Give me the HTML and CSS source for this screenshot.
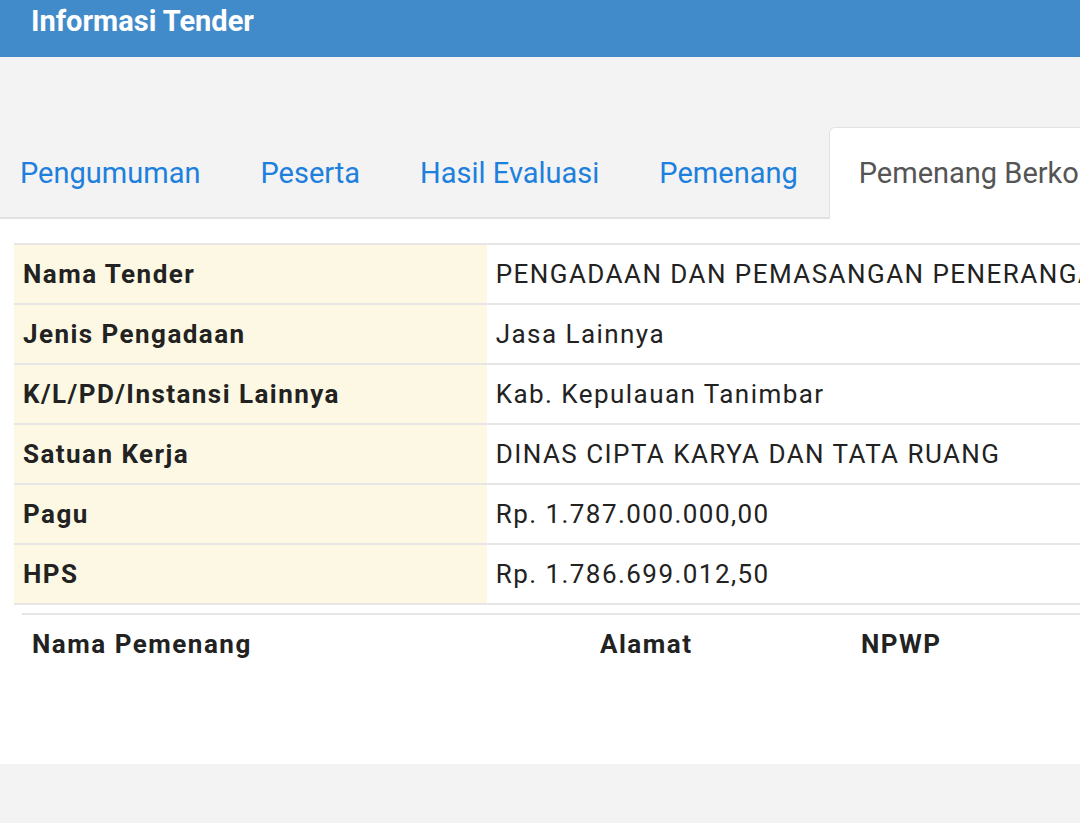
FILE: index.html
```html
<!DOCTYPE html>
<html lang="id">
<head>
<meta charset="utf-8">
<title>Informasi Tender</title>
<link rel="stylesheet" href="styles.css">
</head>
<body>
<div class="page">
  <header class="topbar">
    <h1 class="title">Informasi Tender</h1>
  </header>
  <div class="gap-area"></div>
  <nav class="tabs">
    <a class="tab" href="#">Pengumuman</a>
    <a class="tab" href="#">Peserta</a>
    <a class="tab" href="#">Hasil Evaluasi</a>
    <a class="tab" href="#">Pemenang</a>
    <a class="tab active" href="#">Pemenang Berkontrak</a>
  </nav>
  <main class="panel">
    <table class="info">
      <tr><th>Nama Tender</th><td>PENGADAAN DAN PEMASANGAN PENERANGAN JALAN UMUM</td></tr>
      <tr><th>Jenis Pengadaan</th><td>Jasa Lainnya</td></tr>
      <tr><th>K/L/PD/Instansi Lainnya</th><td>Kab. Kepulauan Tanimbar</td></tr>
      <tr><th>Satuan Kerja</th><td>DINAS CIPTA KARYA DAN TATA RUANG</td></tr>
      <tr><th>Pagu</th><td>Rp. 1.787.000.000,00</td></tr>
      <tr><th>HPS</th><td>Rp. 1.786.699.012,50</td></tr>
    </table>
    <div class="winners">
      <table class="win">
        <tr><th class="c-name">Nama Pemenang</th><th class="c-addr">Alamat</th><th class="c-npwp">NPWP</th></tr>
      </table>
    </div>
  </main>
</div>
</body>
</html>
```
FILE: styles.css
```css
html, body {
  margin: 0;
  padding: 0;
  background: #f3f3f3;
  overflow: hidden;
}
body {
  font-family: Roboto, "Liberation Sans", Arial, sans-serif;
  color: #222;
}
.page {
  width: 1080px;
  overflow: hidden;
}
.topbar {
  background: #428bca;
  height: 57px;
  padding: 0 0 0 31px;
  box-sizing: border-box;
}
.title {
  margin: 0;
  color: #fff;
  font-weight: 700;
  font-size: 29px;
  line-height: 42px;
}
.gap-area {
  height: 70px;
}
.tabs {
  display: flex;
  white-space: nowrap;
  margin-left: -9px;
  border-bottom: 2px solid #e2e2e2;
  height: 90px;
  box-sizing: content-box;
}
.tab {
  display: block;
  padding: 25px 28px;
  margin-right: 2px;
  line-height: 40px;
  font-size: 29px;
  color: #1d80dc;
  text-decoration: none;
  border: 1px solid transparent;
  border-bottom: none;
  border-radius: 6px 6px 0 0;
  height: 90px;
  box-sizing: border-box;
  flex: none;
}
.tab.active {
  background: #fff;
  color: #555;
  border-color: #e2e2e2;
  height: 92px;
  padding-left: 29px;
}
.panel {
  background: #fff;
  height: 545px;
  padding: 24px 0 0 14px;
  box-sizing: border-box;
}
.info {
  border-collapse: collapse;
  width: 1300px;
  font-size: 26px;
  letter-spacing: 1.45px;
}
.info th, .info td {
  border-top: 2px solid #e6e6e6;
  border-bottom: 2px solid #e6e6e6;
  height: 58px;
  padding: 0 9px;
  text-align: left;
  white-space: nowrap;
  vertical-align: middle;
}
.info th {
  background: #fcf8e3;
  font-weight: 700;
  width: 455px;
  color: #222;
}
.info td {
  font-weight: 400;
  color: #222;
}
.winners {
  padding: 8px 0 0 8px;
}
.win {
  border-collapse: collapse;
  width: 1300px;
  font-size: 26px;
  letter-spacing: 1.5px;
}
.win th {
  border-top: 2px solid #e6e6e6;
  text-align: left;
  font-weight: 700;
  height: 58px;
  padding: 0 10px;
  vertical-align: middle;
  color: #222;
}
.c-name { width: 548px; }
.c-addr { width: 241px; }
```
